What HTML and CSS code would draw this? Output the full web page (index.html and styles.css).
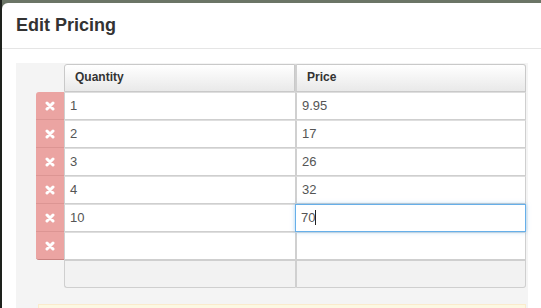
FILE: index.html
```html
<!DOCTYPE html>
<html lang="en">
<head>
    <meta charset="UTF-8">
    <title>Edit Pricing</title>
    <link rel="stylesheet" href="styles.css">
</head>
<body>
    <div class="modal">
        <div class="modal-header">
            <h3>Edit Pricing</h3>
        </div>
        <div class="modal-body">
            <div class="panel">
                <div class="grid">
                    <div class="corner"></div>
                    <div class="th">Quantity</div>
                    <div class="th">Price</div>

                    <div class="del first"><svg viewBox="0 0 10 10"><path d="M2 2 8 8M8 2 2 8"/></svg></div>
                    <div class="td">1</div>
                    <div class="td">9.95</div>

                    <div class="del"><svg viewBox="0 0 10 10"><path d="M2 2 8 8M8 2 2 8"/></svg></div>
                    <div class="td">2</div>
                    <div class="td">17</div>

                    <div class="del"><svg viewBox="0 0 10 10"><path d="M2 2 8 8M8 2 2 8"/></svg></div>
                    <div class="td">3</div>
                    <div class="td">26</div>

                    <div class="del"><svg viewBox="0 0 10 10"><path d="M2 2 8 8M8 2 2 8"/></svg></div>
                    <div class="td">4</div>
                    <div class="td">32</div>

                    <div class="del"><svg viewBox="0 0 10 10"><path d="M2 2 8 8M8 2 2 8"/></svg></div>
                    <div class="td">10</div>
                    <div class="td focus">70<span class="caret"></span></div>

                    <div class="del last"><svg viewBox="0 0 10 10"><path d="M2 2 8 8M8 2 2 8"/></svg></div>
                    <div class="td"></div>
                    <div class="td"></div>

                    <div class="corner"></div>
                    <div class="tf left"></div>
                    <div class="tf right"></div>
                </div>
                <div class="notice"></div>
            </div>
        </div>
    </div>
</body>
</html>
```

FILE: styles.css
```css
html, body{
    height: 100%;
}

body{
    margin: 0;
    padding-top: 3px;
    box-sizing: border-box;
    background: #6b7566;
    border-left: 2px solid #1e221d;
    font-family: "Liberation Sans", Arial, sans-serif;
    overflow: hidden;
}

.modal{
    background: #fff;
    border-radius: 6px 0 0 0;
    height: 100%;
    overflow: hidden;
}

.modal-header{
    height: 45px;
    padding: 0 14px;
    border-bottom: 1px solid #e5e5e5;
    display: flex;
    align-items: center;
}

.modal-header h3{
    margin: 0;
    font-size: 18px;
    font-weight: bold;
    color: #333;
}

.modal-body{
    padding: 14px 0 0 14px;
}

.panel{
    width: 490px;
    height: 250px;
    background: #f4f4f4;
    padding: 1px 2px 0 20px;
}

.grid{
    display: grid;
    grid-template-columns: 28px 231px 231px;
    grid-auto-rows: 28px;
}

.th{
    border: 1px solid #c9c9c9;
    border-left-width: 0;
    background: linear-gradient(#ffffff, #e9e9e9);
    font-size: 12px;
    font-weight: bold;
    color: #333;
    padding: 0 10px;
    line-height: 25px;
}

.th:nth-child(2){
    border-left-width: 1px;
    border-top-left-radius: 3px;
}

.th:nth-child(3){
    border-left: 2px solid #d0d0d0;
    border-top-right-radius: 3px;
}

.td{
    background: #fff;
    border: 1px solid #cfcfcf;
    border-top-color: #dedede;
    font-size: 13px;
    color: #555;
    padding: 0 5px;
    line-height: 26px;
}

.td:nth-child(3n+2){
    border-right-width: 0;
}

.td:nth-child(3n){
    border-left: 2px solid #d0d0d0;
}

.td.focus{
    border: 1px solid #66afe9;
    box-shadow: 0 0 4px rgba(102, 175, 233, 0.6);
    position: relative;
}

.caret{
    display: inline-block;
    width: 1px;
    height: 15px;
    background: #222;
    vertical-align: -3px;
}

.del{
    background: #eba4a2;
    border-bottom: 1px solid #dc9593;
    display: flex;
    align-items: center;
    justify-content: center;
}

.del.first{
    border-top-left-radius: 3px;
}

.del.last{
    border-bottom-left-radius: 3px;
    border-bottom-color: #c98280;
}

.del svg{
    width: 10px;
    height: 10px;
}

.del path{
    stroke: #fff;
    stroke-width: 3;
    stroke-linecap: round;
    fill: none;
}

.tf{
    background: #f2f2f2;
    border: 1px solid #cfcfcf;
}

.tf.left{
    border-right-width: 0;
    border-bottom-left-radius: 3px;
}

.tf.right{
    border-left: 2px solid #d0d0d0;
    border-bottom-right-radius: 3px;
}

.notice{
    margin: 16px 0 0 2px;
    height: 20px;
    background: #fcf8e3;
    border: 1px solid #faebcc;
}
```
